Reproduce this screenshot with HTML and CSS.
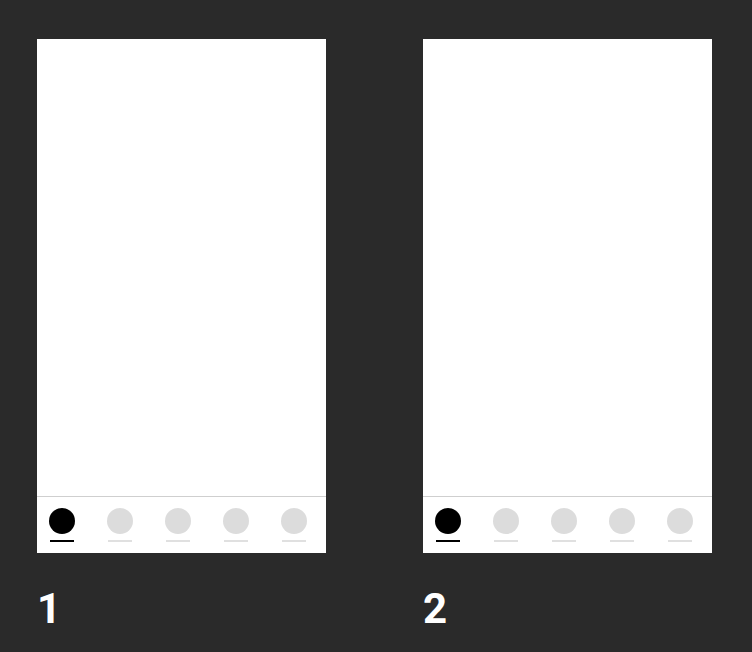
FILE: index.html
```html
<!DOCTYPE html>
<html lang="en">
<head>
    <meta charset="UTF-8">
    <title>Tab bar states</title>
    <link rel="stylesheet" href="styles.css">
</head>
<body>
    <div class="board">
        <!-- Pantalla 1 -->
        <div class="screen">
            <div class="phone">
                <div class="content"></div>
                <nav class="tabbar">
                    <div class="tab active"><span class="dot"></span><span class="bar"></span></div>
                    <div class="tab"><span class="dot"></span><span class="bar"></span></div>
                    <div class="tab"><span class="dot"></span><span class="bar"></span></div>
                    <div class="tab"><span class="dot"></span><span class="bar"></span></div>
                    <div class="tab"><span class="dot"></span><span class="bar"></span></div>
                </nav>
            </div>
            <div class="label">1</div>
        </div>

        <!-- Pantalla 2 -->
        <div class="screen">
            <div class="phone">
                <div class="content"></div>
                <nav class="tabbar">
                    <div class="tab active"><span class="dot"></span><span class="bar"></span></div>
                    <div class="tab"><span class="dot"></span><span class="bar"></span></div>
                    <div class="tab"><span class="dot"></span><span class="bar"></span></div>
                    <div class="tab"><span class="dot"></span><span class="bar"></span></div>
                    <div class="tab"><span class="dot"></span><span class="bar"></span></div>
                </nav>
            </div>
            <div class="label">2</div>
        </div>
    </div>
</body>
</html>
```

FILE: styles.css
```css
/* General */
body {
    margin: 0;
    padding: 39px 0 0 37px;
    background-color: #2a2a2a;
    font-family: Roboto, 'Liberation Sans', sans-serif;
}

.board {
    display: flex;
    gap: 97px;
}

/* Pantalla */
.phone {
    width: 289px;
    height: 514px;
    background-color: #fff;
    display: flex;
    flex-direction: column;
}

.content {
    flex: 1;
}

/* Barra de pestañas */
.tabbar {
    height: 57px;
    border-top: 1px solid #cfcfcf;
    box-sizing: border-box;
    display: flex;
    gap: 32px;
    padding: 11px 0 0 12px;
}

.tab {
    width: 26px;
    display: flex;
    flex-direction: column;
    align-items: center;
}

.dot {
    width: 26px;
    height: 26px;
    border-radius: 50%;
    background-color: #dcdcdc;
}

.bar {
    width: 24px;
    height: 2px;
    margin-top: 6px;
    background-color: #e0e0e0;
}

.tab.active .dot,
.tab.active .bar {
    background-color: #000;
}

/* Número */
.label {
    margin-top: 35px;
    font-size: 42px;
    line-height: 42px;
    font-weight: 700;
    color: #fff;
}
```
